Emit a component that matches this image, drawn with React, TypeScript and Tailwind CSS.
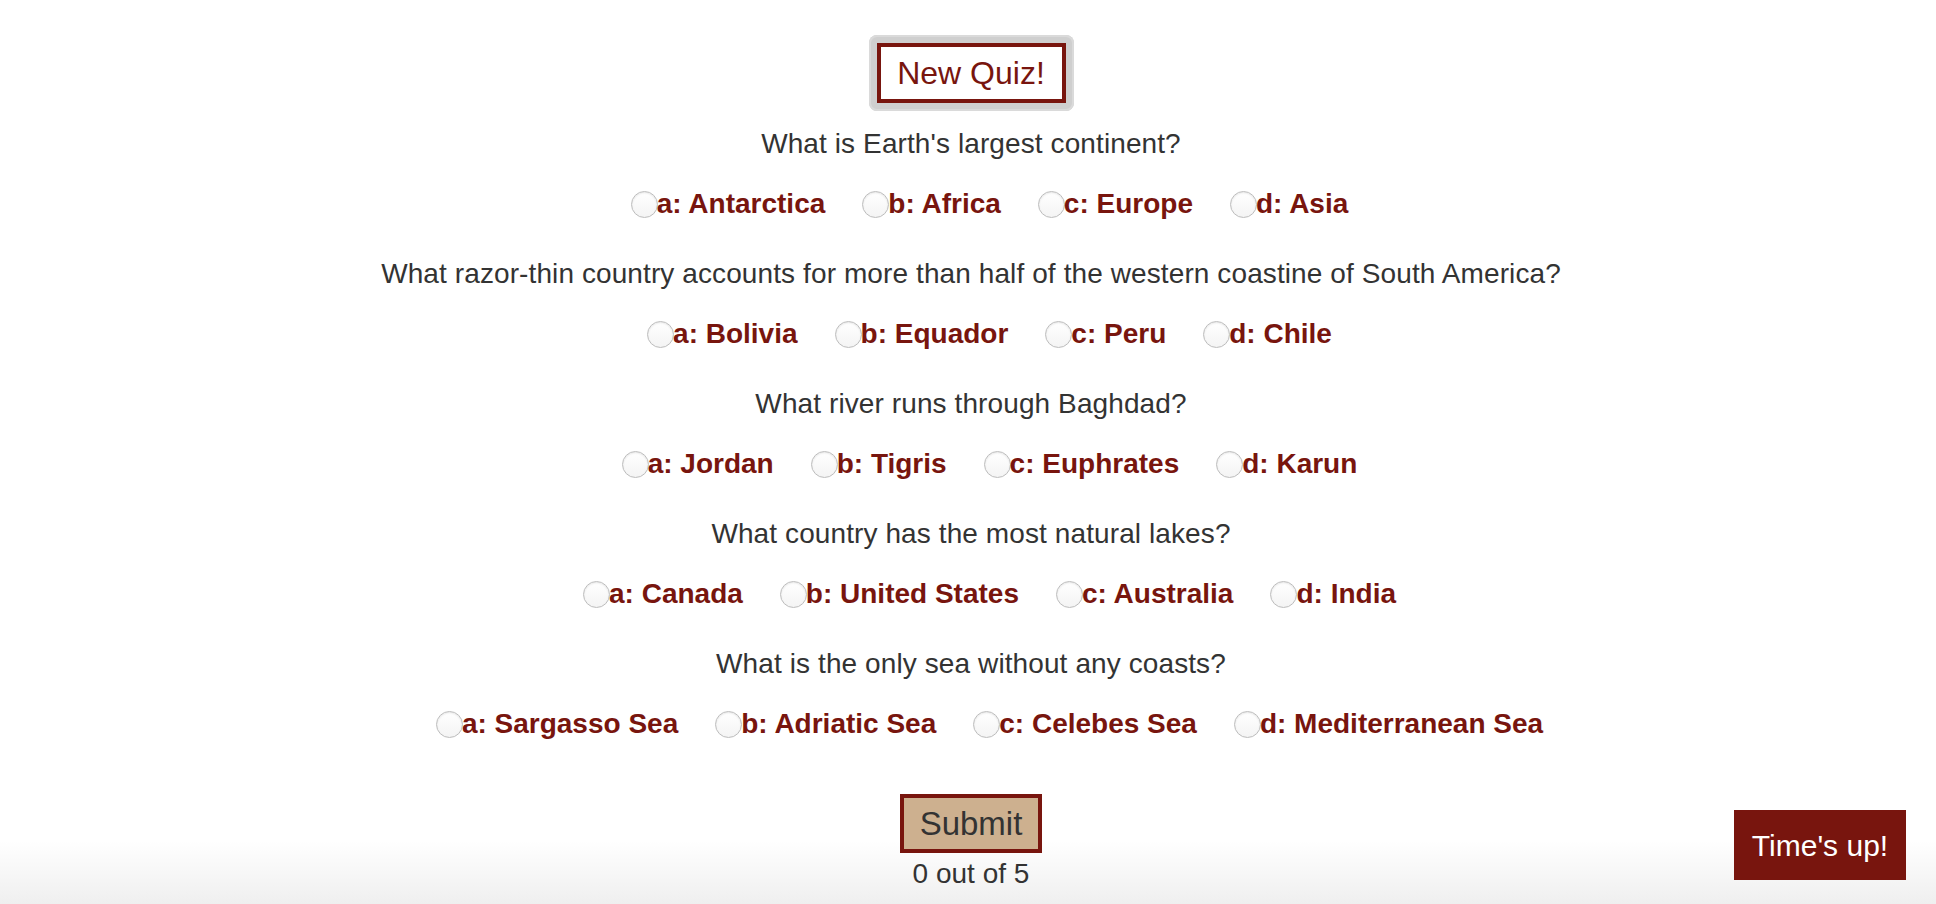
import React from "react";

const questions: { q: string; a: string[] }[] = [
  { q: "What is Earth's largest continent?", a: ["a: Antarctica", "b: Africa", "c: Europe", "d: Asia"] },
  {
    q: "What razor-thin country accounts for more than half of the western coastine of South America?",
    a: ["a: Bolivia", "b: Equador", "c: Peru", "d: Chile"],
  },
  { q: "What river runs through Baghdad?", a: ["a: Jordan", "b: Tigris", "c: Euphrates", "d: Karun"] },
  { q: "What country has the most natural lakes?", a: ["a: Canada", "b: United States", "c: Australia", "d: India"] },
  {
    q: "What is the only sea without any coasts?",
    a: ["a: Sargasso Sea", "b: Adriatic Sea", "c: Celebes Sea", "d: Mediterranean Sea"],
  },
];

function Radio() {
  return (
    <span className="inline-block w-[27px] h-[27px] rounded-full border border-[#bdbdbd] bg-[linear-gradient(to_bottom,#ffffff,#f4f4f4)] shadow-[inset_0_1px_2px_rgba(0,0,0,0.10)] shrink-0 mr-[-1px]" />
  );
}

export default function App() {
  return (
    <div
      className="min-h-screen w-full bg-[linear-gradient(to_bottom,#ffffff_0%,#ffffff_93%,#efefef_100%)] text-[#333333]"
      style={{ fontFamily: '"Liberation Sans", Arial, Helvetica, sans-serif' }}
    >
      <div className="flex flex-col items-center pt-[35px] pl-[6px]">
        <div className="p-[8px] rounded-[8px] bg-[#cfcfcf] shadow-[inset_0_0_0_2px_#dadada]">
          <button className="block w-[189px] h-[60px] bg-white border-4 border-[#78150e] text-[#78150e] text-[32px] leading-none">
            New Quiz!
          </button>
        </div>

        <div className="flex flex-col items-center mt-[17px]">
          {questions.map((item, qi) => (
            <div key={qi} className={`flex flex-col items-center ${qi > 0 ? "mt-[38px]" : ""}`}>
              <div className="text-[28px] leading-[32px] text-[#333333] tracking-[0.1px]">{item.q}</div>
              <div className="flex items-center mt-[28px] h-[32px]">
                {item.a.map((ans, ai) => (
                  <label key={ai} className="inline-flex items-center ml-[37px] cursor-pointer">
                    <Radio />
                    <span className="text-[28px] leading-[32px] font-bold text-[#78150e]">{ans}</span>
                  </label>
                ))}
              </div>
            </div>
          ))}
        </div>

        <button className="mt-[54px] w-[142px] h-[59px] bg-[#cdb08f] border-4 border-[#78150e] text-[33px] leading-none text-[#333333]">
          Submit
        </button>
        <div className="mt-[5px] text-[28px] leading-[32px] text-[#333333]">0 out of 5</div>
      </div>

      <div className="fixed right-[30px] bottom-[24px] w-[172px] h-[70px] bg-[#78150e] text-white text-[30px] flex items-center justify-center">
        Time's up!
      </div>
    </div>
  );
}
